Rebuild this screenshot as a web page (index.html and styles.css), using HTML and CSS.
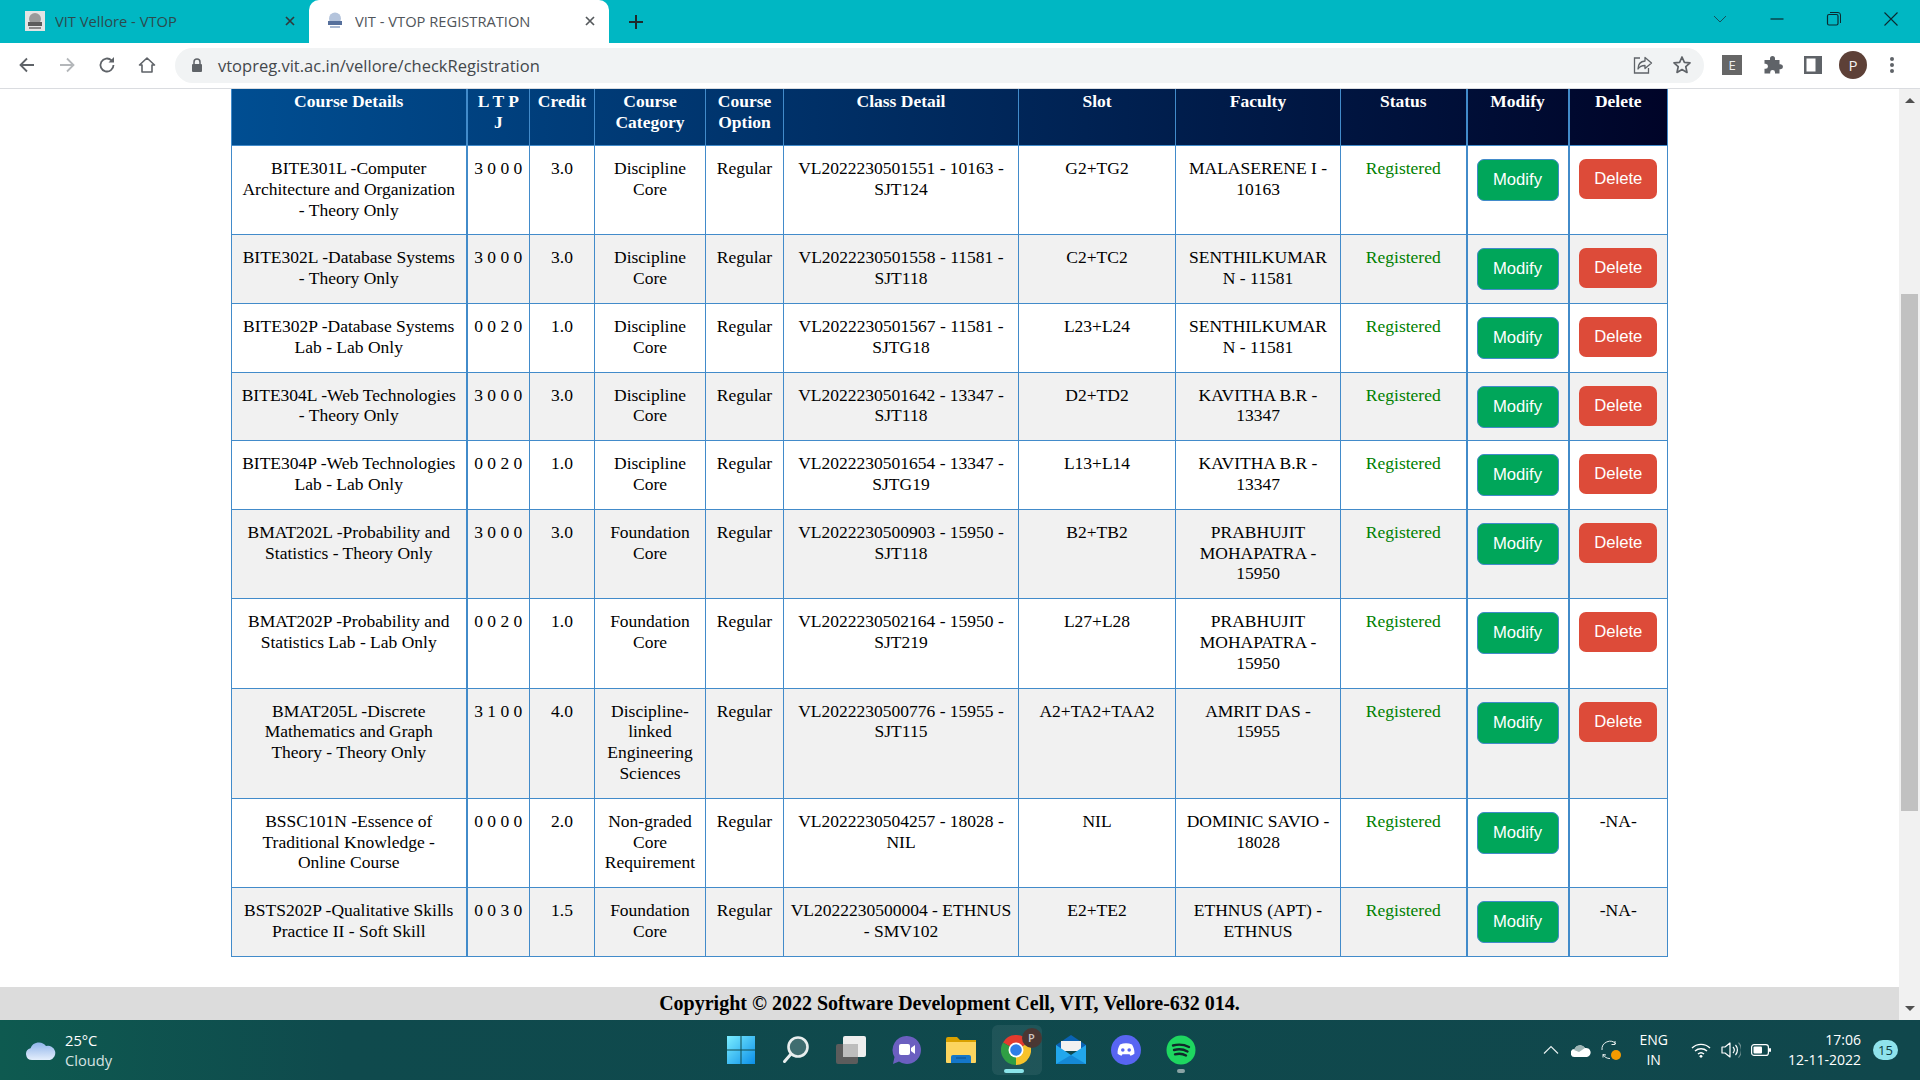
FILE: index.html
```html
<!DOCTYPE html>
<html lang="en">
<head>
    <meta charset="UTF-8">
    <title>VIT - VTOP REGISTRATION</title>
    <link rel="stylesheet" href="styles.css">
</head>
<body>
    <div class="tabstrip">
        <div class="tab">
            <svg class="favicon" width="20" height="20" viewBox="0 0 20 20"><rect width="20" height="20" fill="#e4e4e4"/><circle cx="10" cy="8" r="6" fill="#9a9a9a"/><rect x="3" y="11" width="14" height="4" fill="#5c5c5c"/><rect x="4" y="16" width="12" height="2" fill="#8a8a8a"/></svg>
            <span class="tab-title">VIT Vellore - VTOP</span>
            <svg class="tab-close" width="12" height="12" viewBox="0 0 12 12"><path d="M2 2l8 8M10 2l-8 8" stroke="#2f3a3c" stroke-width="1.7"/></svg>
        </div>
        <div class="tab tab-active">
            <svg class="favicon" width="20" height="20" viewBox="0 0 20 20"><circle cx="10" cy="7.5" r="6" fill="#b4c4dc"/><rect x="3" y="10" width="14" height="4" fill="#56709c"/><rect x="5" y="15" width="10" height="2" fill="#a9b9d2"/></svg>
            <span class="tab-title">VIT - VTOP REGISTRATION</span>
            <svg class="tab-close" width="12" height="12" viewBox="0 0 12 12"><path d="M2 2l8 8M10 2l-8 8" stroke="#55595c" stroke-width="1.7"/></svg>
        </div>
        <svg class="new-tab" width="16" height="16" viewBox="0 0 16 16"><path d="M8 1v14M1 8h14" stroke="#1f2a2c" stroke-width="2"/></svg>
        <div class="window-controls">
            <svg width="16" height="16" viewBox="0 0 16 16"><path d="M2 5l6 6 6-6" fill="none" stroke="#17505a" stroke-width="1"/></svg>
            <svg width="16" height="16" viewBox="0 0 16 16"><path d="M1.500 8h13" stroke="#0b2a30" stroke-width="1.200"/></svg>
            <svg width="16" height="16" viewBox="0 0 16 16"><rect x="1.500" y="3.500" width="10.500" height="10.500" rx="1.500" fill="none" stroke="#0b2a30" stroke-width="1.200"/><path d="M4 1.500h8a2.500 2.500 0 0 1 2.500 2.500v8" fill="none" stroke="#0b2a30" stroke-width="1"/></svg>
            <svg width="16" height="16" viewBox="0 0 16 16"><path d="M1.500 1.500l13 13M14.500 1.500l-13 13" stroke="#0b2a30" stroke-width="1.100"/></svg>
        </div>
    </div>

    <div class="toolbar">
        <div class="nav-buttons">
            <svg width="18" height="18" viewBox="0 0 18 18"><path d="M16 9H3M9 2.500L2.500 9 9 15.500" fill="none" stroke="#5f6368" stroke-width="1.800"/></svg>
            <svg width="18" height="18" viewBox="0 0 18 18"><path d="M2 9h13M9 2.500L15.500 9 9 15.500" fill="none" stroke="#b4b7ba" stroke-width="1.800"/></svg>
            <svg width="18" height="18" viewBox="0 0 18 18"><path d="M15.500 9a6.500 6.500 0 1 1-2-4.700" fill="none" stroke="#5f6368" stroke-width="1.800"/><path d="M16 1v5.500h-5.500z" fill="#5f6368"/></svg>
            <svg width="18" height="18" viewBox="0 0 18 18"><path d="M1.500 9L9 2l7.500 7H14v7H4V9z" fill="none" stroke="#5f6368" stroke-width="1.600" stroke-linejoin="round"/></svg>
        </div>
        <div class="urlbar">
            <svg class="lock" width="12" height="14" viewBox="0 0 12 14"><path d="M3 6V4a3 3 0 0 1 6 0v2" fill="none" stroke="#5f6368" stroke-width="1.500"/><rect x="1" y="6" width="10" height="8" rx="1" fill="#5f6368"/></svg>
            <span class="url">vtopreg.vit.ac.in/vellore/checkRegistration</span>
            <svg class="url-icon" width="20" height="20" viewBox="0 0 20 20"><path d="M7 3H1.500v15h14v-5" fill="none" stroke="#5f6368" stroke-width="1.300"/><path d="M12 2.500l6.500 5.500-6.500 5.500V10.500c-3.500 0-5.500 1-7 3.500 0-4.500 2.500-7.500 7-8z" fill="none" stroke="#5f6368" stroke-width="1.300" stroke-linejoin="round"/></svg>
            <svg class="url-icon" width="20" height="20" viewBox="0 0 20 20"><path d="M10 2l2.400 5.300 5.600.6-4.200 3.800 1.200 5.700L10 14.500l-5 2.900 1.200-5.700L2 7.900l5.600-.6z" fill="none" stroke="#5f6368" stroke-width="1.700" stroke-linejoin="round"/></svg>
        </div>
        <div class="ext-buttons">
            <span class="ext-e">E</span>
            <svg width="20" height="20" viewBox="0 0 20 20"><path d="M7 3.500a2.500 2.500 0 0 1 5 0V5h4.500v4.200h1a2.500 2.500 0 0 1 0 5h-1v4.300H12v-1.200a2.400 2.400 0 0 0-4.800 0v1.200H1.500v-4.700h1a2.500 2.500 0 0 0 0-5h-1V5H7z" fill="#5f6368"/></svg>
            <svg width="18" height="18" viewBox="0 0 18 18"><rect width="18" height="18" fill="#5f6368"/><rect x="2.500" y="2.500" width="9" height="13" fill="#fff"/></svg>
            <span class="avatar">P</span>
            <svg width="6" height="18" viewBox="0 0 6 18"><circle cx="3" cy="3" r="2" fill="#5f6368"/><circle cx="3" cy="9" r="2" fill="#5f6368"/><circle cx="3" cy="15" r="2" fill="#5f6368"/></svg>
        </div>
    </div>

    <div class="viewport">
        <div class="page">
            <div class="page-content">
                <table class="course-table">
                    <colgroup>
                        <col class="col-course"><col class="col-ltpj"><col class="col-credit"><col class="col-category"><col class="col-option"><col class="col-class"><col class="col-slot"><col class="col-faculty"><col class="col-status"><col class="col-modify"><col class="col-delete">
                    </colgroup>
                    <thead>
                        <tr>
                            <th>Course Details</th><th>L T P J</th><th>Credit</th><th>Course Category</th><th>Course Option</th><th>Class Detail</th><th>Slot</th><th>Faculty</th><th>Status</th><th>Modify</th><th>Delete</th>
                        </tr>
                    </thead>
                    <tbody>
                        <tr>
                            <td>BITE301L -Computer Architecture and Organization - Theory Only</td><td>3 0 0 0</td><td>3.0</td><td>Discipline Core</td><td>Regular</td><td>VL2022230501551 - 10163 - SJT124</td><td>G2+TG2</td><td>MALASERENE I - 10163</td><td class="status">Registered</td>
                            <td class="action"><button class="btn btn-modify">Modify</button></td><td class="action"><button class="btn btn-delete">Delete</button></td>
                        </tr>
                        <tr>
                            <td>BITE302L -Database Systems - Theory Only</td><td>3 0 0 0</td><td>3.0</td><td>Discipline Core</td><td>Regular</td><td>VL2022230501558 - 11581 - SJT118</td><td>C2+TC2</td><td>SENTHILKUMAR N - 11581</td><td class="status">Registered</td>
                            <td class="action"><button class="btn btn-modify">Modify</button></td><td class="action"><button class="btn btn-delete">Delete</button></td>
                        </tr>
                        <tr>
                            <td>BITE302P -Database Systems Lab - Lab Only</td><td>0 0 2 0</td><td>1.0</td><td>Discipline Core</td><td>Regular</td><td>VL2022230501567 - 11581 - SJTG18</td><td>L23+L24</td><td>SENTHILKUMAR N - 11581</td><td class="status">Registered</td>
                            <td class="action"><button class="btn btn-modify">Modify</button></td><td class="action"><button class="btn btn-delete">Delete</button></td>
                        </tr>
                        <tr>
                            <td>BITE304L -Web Technologies - Theory Only</td><td>3 0 0 0</td><td>3.0</td><td>Discipline Core</td><td>Regular</td><td>VL2022230501642 - 13347 - SJT118</td><td>D2+TD2</td><td>KAVITHA B.R - 13347</td><td class="status">Registered</td>
                            <td class="action"><button class="btn btn-modify">Modify</button></td><td class="action"><button class="btn btn-delete">Delete</button></td>
                        </tr>
                        <tr>
                            <td>BITE304P -Web Technologies Lab - Lab Only</td><td>0 0 2 0</td><td>1.0</td><td>Discipline Core</td><td>Regular</td><td>VL2022230501654 - 13347 - SJTG19</td><td>L13+L14</td><td>KAVITHA B.R - 13347</td><td class="status">Registered</td>
                            <td class="action"><button class="btn btn-modify">Modify</button></td><td class="action"><button class="btn btn-delete">Delete</button></td>
                        </tr>
                        <tr>
                            <td>BMAT202L -Probability and Statistics - Theory Only</td><td>3 0 0 0</td><td>3.0</td><td>Foundation Core</td><td>Regular</td><td>VL2022230500903 - 15950 - SJT118</td><td>B2+TB2</td><td>PRABHUJIT MOHAPATRA - 15950</td><td class="status">Registered</td>
                            <td class="action"><button class="btn btn-modify">Modify</button></td><td class="action"><button class="btn btn-delete">Delete</button></td>
                        </tr>
                        <tr>
                            <td>BMAT202P -Probability and Statistics Lab - Lab Only</td><td>0 0 2 0</td><td>1.0</td><td>Foundation Core</td><td>Regular</td><td>VL2022230502164 - 15950 - SJT219</td><td>L27+L28</td><td>PRABHUJIT MOHAPATRA - 15950</td><td class="status">Registered</td>
                            <td class="action"><button class="btn btn-modify">Modify</button></td><td class="action"><button class="btn btn-delete">Delete</button></td>
                        </tr>
                        <tr>
                            <td>BMAT205L -Discrete Mathematics and Graph Theory - Theory Only</td><td>3 1 0 0</td><td>4.0</td><td>Discipline-linked Engineering Sciences</td><td>Regular</td><td>VL2022230500776 - 15955 - SJT115</td><td>A2+TA2+TAA2</td><td>AMRIT DAS - 15955</td><td class="status">Registered</td>
                            <td class="action"><button class="btn btn-modify">Modify</button></td><td class="action"><button class="btn btn-delete">Delete</button></td>
                        </tr>
                        <tr>
                            <td>BSSC101N -Essence of Traditional Knowledge - Online Course</td><td>0 0 0 0</td><td>2.0</td><td>Non-graded Core Requirement</td><td>Regular</td><td>VL2022230504257 - 18028 - NIL</td><td>NIL</td><td>DOMINIC SAVIO - 18028</td><td class="status">Registered</td>
                            <td class="action"><button class="btn btn-modify">Modify</button></td><td>-NA-</td>
                        </tr>
                        <tr>
                            <td>BSTS202P -Qualitative Skills Practice II - Soft Skill</td><td>0 0 3 0</td><td>1.5</td><td>Foundation Core</td><td>Regular</td><td>VL2022230500004 - ETHNUS - SMV102</td><td>E2+TE2</td><td>ETHNUS (APT) - ETHNUS</td><td class="status">Registered</td>
                            <td class="action"><button class="btn btn-modify">Modify</button></td><td>-NA-</td>
                        </tr>
                    </tbody>
                </table>
            </div>
            <footer class="page-footer">Copyright © 2022 Software Development Cell, VIT, Vellore-632 014.</footer>
        </div>
        <div class="scrollbar">
            <span class="arrow-up"></span>
            <div class="scroll-track"><div class="scroll-thumb"></div></div>
            <span class="arrow-down"></span>
        </div>
    </div>

    <div class="taskbar">
        <div class="weather">
            <svg width="30" height="20" viewBox="0 0 30 20">
                <defs><linearGradient id="cloud" x1="0" y1="0" x2="0" y2="1"><stop offset="0" stop-color="#8fb4ea"/><stop offset="1" stop-color="#e4eefc"/></linearGradient></defs>
                <path d="M6 20a6 6 0 0 1-1.500-11.800A9 9 0 0 1 20 6a7 7 0 0 1 4 14z" fill="url(#cloud)"/>
            </svg>
            <div class="weather-text">
                <span class="temp">25°C</span>
                <span class="sky">Cloudy</span>
            </div>
        </div>

        <div class="task-icons">
            <div class="task-icon">
                <svg width="30" height="30" viewBox="0 0 30 30">
                    <defs><linearGradient id="winblue" x1="0" y1="0" x2="1" y2="1"><stop offset="0" stop-color="#7beeff"/><stop offset="1" stop-color="#0b8fe8"/></linearGradient></defs>
                    <path d="M1 1h13.500v13.500H1zM15.500 1H29v13.500H15.500zM1 15.500h13.500V29H1zM15.500 15.500H29V29H15.500z" fill="url(#winblue)"/>
                </svg>
            </div>
            <div class="task-icon">
                <svg width="30" height="30" viewBox="0 0 30 30"><circle cx="17" cy="12" r="9.500" fill="#3f6d70" stroke="#e8eeee" stroke-width="2.600"/><path d="M10 19l-6.500 7.500" stroke="#e8eeee" stroke-width="3" stroke-linecap="round"/></svg>
            </div>
            <div class="task-icon">
                <svg width="30" height="30" viewBox="0 0 30 30"><rect x="0" y="9" width="22" height="20" rx="2" fill="#5c5c5c"/><rect x="7" y="1" width="23" height="21" rx="2" fill="#eeeeee"/><rect x="7" y="9" width="15" height="13" fill="#bdbdbd"/></svg>
            </div>
            <div class="task-icon">
                <svg width="30" height="30" viewBox="0 0 30 30"><path d="M16 1a14 14 0 1 1-8 25.500L2 29l1.500-7A14 14 0 0 1 16 1z" fill="#6b5fc0"/><rect x="8" y="9" width="11" height="11" rx="2" fill="#fff"/><path d="M20 13l4-3v9l-4-3z" fill="#fff"/></svg>
            </div>
            <div class="task-icon">
                <svg width="30" height="30" viewBox="0 0 30 30"><path d="M0 4a2 2 0 0 1 2-2h9l3 3h16v3H0z" fill="#d9a100"/><path d="M0 7h30v20a1 1 0 0 1-1 1H1a1 1 0 0 1-1-1z" fill="#fcd55f"/><path d="M5 28v-6a2 2 0 0 1 2-2h16a2 2 0 0 1 2 2v6z" fill="#1477c9"/><path d="M10 23h10" stroke="#0b4f8c" stroke-width="1"/></svg>
            </div>
            <div class="task-icon task-active">
                <svg width="30" height="30" viewBox="0 0 30 30"><path d="M15 15L2 7.500A15 15 0 0 1 28 7.500z" fill="#e33b2e"/><path d="M15 15L28 7.500A15 15 0 0 1 15 30z" fill="#f7c32b"/><path d="M15 15L15 30A15 15 0 0 1 2 7.500z" fill="#2f9e44"/><circle cx="15" cy="15" r="7.500" fill="#fff"/><circle cx="15" cy="15" r="5.800" fill="#2f7ee8"/></svg>
                <span class="task-badge">P</span>
                <span class="task-dot task-dot-active"></span>
            </div>
            <div class="task-icon">
                <svg width="30" height="30" viewBox="0 0 30 30"><path d="M0 10L15 0l15 10v4H0z" fill="#0a62b4"/><path d="M5 6h20v10H5z" fill="#f1f1f1"/><path d="M0 10l15 10 15-10v19H0z" fill="#22a7ec"/><path d="M0 29l15-9 15 9z" fill="#1589d6"/></svg>
            </div>
            <div class="task-icon">
                <svg width="30" height="30" viewBox="0 0 30 30"><circle cx="15" cy="15" r="15" fill="#5865f2"/><path d="M9 9.500c4-1.600 8-1.600 12 0 1.800 2.800 2.600 6 2.400 9.300-1.300 1-2.600 1.600-3.900 2l-1-1.500H11.500l-1 1.500c-1.300-.4-2.600-1-3.900-2-.2-3.300.6-6.500 2.400-9.300z" fill="#fff"/><circle cx="11.800" cy="15" r="1.800" fill="#5865f2"/><circle cx="18.200" cy="15" r="1.800" fill="#5865f2"/></svg>
            </div>
            <div class="task-icon">
                <svg width="30" height="30" viewBox="0 0 30 30"><circle cx="15" cy="15" r="14.500" fill="#1ed760"/><path d="M7 10.500c5.500-1.500 11-1 16 1.500M8 15c4.500-1.200 9.500-.8 13.500 1.500M9 19.300c4-1 8-.6 11 1.200" fill="none" stroke="#10292a" stroke-width="2.400" stroke-linecap="round"/></svg>
                <span class="task-dot"></span>
            </div>
        </div>

        <div class="tray">
            <svg class="tray-chevron" width="16" height="10" viewBox="0 0 16 10"><path d="M1 8.500l7-7 7 7" fill="none" stroke="#e6eeee" stroke-width="1.200"/></svg>
            <svg class="tray-cloud" width="20" height="14" viewBox="0 0 20 14"><path d="M4 14a4 4 0 0 1-.5-8A6 6 0 0 1 14 5a4.500 4.500 0 0 1 2 9z" fill="#fff"/><path d="M3.500 6A6 6 0 0 1 14 5L8 9 3 7z" fill="#9fb5b5"/></svg>
            <svg class="tray-sync" width="20" height="20" viewBox="0 0 20 20"><path d="M1 10a8 8 0 0 1 14-6M14 1v3.500h-3.500M5 15l-3-.5v3" fill="none" stroke="#e6eeee" stroke-width="1"/><path d="M2 14.500a8 8 0 0 0 7 4" fill="none" stroke="#e6eeee" stroke-width="1"/><circle cx="15" cy="15" r="5" fill="#f59b00"/></svg>
            <div class="lang"><span>ENG</span><span>IN</span></div>
            <svg class="tray-wifi" width="20" height="16" viewBox="0 0 20 16"><path d="M1 6a13 13 0 0 1 18 0M4 9a9 9 0 0 1 12 0M7 12a4.500 4.500 0 0 1 6 0" fill="none" stroke="#fff" stroke-width="1.400"/><circle cx="10" cy="14.300" r="1.400" fill="#fff"/></svg>
            <svg class="tray-sound" width="20" height="18" viewBox="0 0 20 18"><path d="M1 6h3l5-4v14l-5-4H1z" fill="none" stroke="#fff" stroke-width="1.200" stroke-linejoin="round"/><path d="M12 6a4.500 4.500 0 0 1 0 6M14.500 4a7.500 7.500 0 0 1 0 10" fill="none" stroke="#fff" stroke-width="1.200"/><path d="M17.500 1.500a11 11 0 0 1 0 15" fill="none" stroke="#6f8f90" stroke-width="1.100"/></svg>
            <svg class="tray-battery" width="20" height="12" viewBox="0 0 20 12"><rect x=".6" y=".6" width="16.800" height="10.800" rx="2.500" fill="none" stroke="#fff" stroke-width="1.200"/><rect x="2.500" y="2.500" width="8.500" height="7" rx="1" fill="#fff"/><rect x="18" y="4" width="2" height="4" rx="1" fill="#fff"/></svg>
            <div class="clock"><span>17:06</span><span>12-11-2022</span></div>
            <span class="notify">15</span>
        </div>
    </div>
</body>
</html>
```

FILE: styles.css
```css
* {
    margin: 0;
    padding: 0;
    box-sizing: border-box;
}

html, body {
    height: 100%;
    overflow: hidden;
}

body {
    display: flex;
    flex-direction: column;
    background: #fff;
    font-family: 'Liberation Serif', 'Times New Roman', serif;
}

svg {
    display: block;
    flex-shrink: 0;
}

/* browser chrome */
.tabstrip {
    height: 43px;
    flex-shrink: 0;
    display: flex;
    align-items: center;
    background: #00b7c3;
    font-family: 'Open Sans', sans-serif;
}

.tab {
    width: 300px;
    height: 43px;
    padding: 0 13px 2px 25px;
    display: flex;
    align-items: center;
    color: #2c4a4e;
    font-size: 14.700px;
}

.tab:first-child {
    width: 309px;
}

.tab-active {
    width: 300px;
    padding-left: 16px;
    background: #fff;
    border-radius: 10px 10px 0 0;
    color: #50555a;
}

.tab-title {
    margin-left: 10px;
    flex: 1;
    white-space: nowrap;
    overflow: hidden;
}

.new-tab {
    margin-left: 19px;
}

.window-controls {
    margin-left: auto;
    display: flex;
    gap: 41px;
    padding-right: 21px;
    margin-top: -6px;
}

.toolbar {
    height: 46px;
    flex-shrink: 0;
    display: flex;
    align-items: center;
    background: #fff;
    border-bottom: 1px solid #dadce0;
    padding-bottom: 1px;
}

.nav-buttons {
    width: 175px;
    padding-left: 18px;
    display: flex;
    gap: 22px;
}

.urlbar {
    width: 1529px;
    height: 35px;
    display: flex;
    align-items: center;
    background: #f1f3f4;
    border-radius: 18px;
    padding: 0 12px 0 16px;
    font-family: 'Open Sans', sans-serif;
    color: #44484c;
}

.url {
    margin-left: 15px;
    flex: 1;
    font-size: 16.500px;
    white-space: nowrap;
}

.url-icon {
    margin-left: 19px;
}

.ext-buttons {
    flex: 1;
    padding-left: 18px;
    display: flex;
    align-items: center;
    gap: 21px;
}

.ext-e {
    width: 20px;
    height: 20px;
    background: #666;
    color: #eee;
    font: 13px 'Open Sans', sans-serif;
    line-height: 20px;
    text-align: center;
}

.avatar {
    width: 28px;
    height: 28px;
    margin-left: -4px;
    margin-right: 1px;
    border-radius: 50%;
    background: #5d4037;
    color: #f2f2f2;
    font: 15px/28px 'Open Sans', sans-serif;
    text-align: center;
}

/* page */
.viewport {
    flex: 1;
    min-height: 0;
    display: flex;
}

.page {
    flex: 1;
    display: flex;
    flex-direction: column;
    min-width: 0;
}

.page-content {
    flex: 1;
    min-height: 0;
}

.course-table {
    width: 1436px;
    margin: 0 auto;
    border-collapse: collapse;
    table-layout: fixed;
    font-size: 17.500px;
    line-height: 20.800px;
    color: #000;
    text-align: center;
}

.col-course { width: 235px; }
.col-ltpj { width: 63px; }
.col-credit { width: 65px; }
.col-category { width: 111px; }
.col-option { width: 78px; }
.col-class { width: 235px; }
.col-slot { width: 157px; }
.col-faculty { width: 165px; }
.col-status { width: 126px; }
.col-modify { width: 102px; }
.col-delete { width: 99px; }

.course-table thead tr {
    background: linear-gradient(to right, #004e92, #000428);
}

.course-table th {
    padding: 2px 6px 12.500px;
    color: #fff;
    font-weight: bold;
    vertical-align: top;
    border: 1px solid #428bca;
    border-top: 0;
}

.course-table td {
    padding: 12px 6px 14px;
    vertical-align: top;
    border: 1px solid #428bca;
}

.course-table td:first-child {
    padding-left: 8px;
    padding-right: 8px;
}

.course-table td.action {
    padding-bottom: 8px;
}

.course-table th:nth-child(1),
.course-table td:nth-child(1),
.course-table th:nth-child(9),
.course-table td:nth-child(9),
.course-table th:nth-child(10),
.course-table td:nth-child(10) {
    border-right-width: 2px;
}

.course-table tbody tr:nth-child(even) {
    background: #f1f1f1;
}

.status {
    color: #008000;
}

.btn {
    display: block;
    margin: 1px auto 0;
    font-family: 'Liberation Sans', Arial, sans-serif;
    font-size: 16.670px;
    color: #fff;
    border-radius: 7px;
    cursor: pointer;
}

.btn-modify {
    width: 82px;
    height: 42px;
    background: #00a65a;
    border: 1px solid #428bca;
}

.btn-delete {
    width: 78px;
    height: 40px;
    background: #dd4b39;
    border: 0;
}

.page-footer {
    height: 33px;
    flex-shrink: 0;
    background: #dcdcdc;
    color: #000;
    font-size: 20px;
    font-weight: bold;
    line-height: 33px;
    text-align: center;
}

.scrollbar {
    width: 21px;
    flex-shrink: 0;
    display: flex;
    flex-direction: column;
    align-items: center;
    background: #f1f1f1;
}

.arrow-up,
.arrow-down {
    width: 0;
    height: 0;
    margin: 9px 0;
    border-left: 5px solid transparent;
    border-right: 5px solid transparent;
}

.arrow-up {
    border-bottom: 5px solid #505050;
}

.arrow-down {
    border-top: 5px solid #505050;
}

.scroll-track {
    flex: 1;
    width: 100%;
    padding: 182px 2px 186px;
}

.scroll-thumb {
    height: 100%;
    background: #c1c1c1;
}

/* windows taskbar */
.taskbar {
    height: 60px;
    flex-shrink: 0;
    display: grid;
    grid-template-columns: 1fr auto 1fr;
    align-items: center;
    background: linear-gradient(to right, #0e5a50, #0f4a4d 18%, #10474c);
    color: #fff;
    font-family: 'Open Sans', sans-serif;
}

.weather {
    display: flex;
    align-items: center;
    padding-left: 26px;
    gap: 9px;
}

.weather-text {
    display: flex;
    flex-direction: column;
    font-size: 14.700px;
    line-height: 20px;
}

.sky {
    color: #d6e2e2;
}

.task-icons {
    display: flex;
    height: 60px;
    padding-left: 2px;
}

.task-icon {
    position: relative;
    width: 55px;
    height: 60px;
    display: flex;
    align-items: center;
    justify-content: center;
}

.task-active::before {
    content: '';
    position: absolute;
    top: 5px;
    left: 3px;
    width: 50px;
    height: 50px;
    background: rgba(255, 255, 255, 0.07);
    border-radius: 6px;
}

.task-icon svg {
    position: relative;
}

.task-badge {
    position: absolute;
    top: 8px;
    right: 2px;
    width: 20px;
    height: 20px;
    border-radius: 50%;
    background: #4a3733;
    color: #cfc6c2;
    font-size: 11px;
    font-weight: 600;
    line-height: 20px;
    text-align: center;
}

.task-dot {
    position: absolute;
    bottom: 7px;
    left: 23px;
    width: 8px;
    height: 4px;
    border-radius: 2px;
    background: #8aa3a5;
}

.task-dot-active {
    left: 15px;
    width: 20px;
    background: #8be4ea;
}

.tray {
    display: flex;
    align-items: center;
    justify-content: flex-end;
    padding-right: 22px;
}

.tray-cloud { margin-left: 12px; }
.tray-sync { margin-left: 10px; }
.tray-wifi { margin-left: 23px; }
.tray-sound { margin-left: 10px; }
.tray-battery { margin-left: 10px; }

.lang {
    margin-left: 18px;
    display: flex;
    flex-direction: column;
    align-items: center;
    font-size: 14px;
    line-height: 20px;
}

.clock {
    margin-left: 17px;
    display: flex;
    flex-direction: column;
    align-items: flex-end;
    font-size: 14px;
    line-height: 20px;
}

.notify {
    width: 25px;
    height: 20px;
    margin-left: 12px;
    border-radius: 10px;
    background: #8fe3ec;
    color: #0d3b40;
    font-size: 13px;
    line-height: 20px;
    text-align: center;
}
```
